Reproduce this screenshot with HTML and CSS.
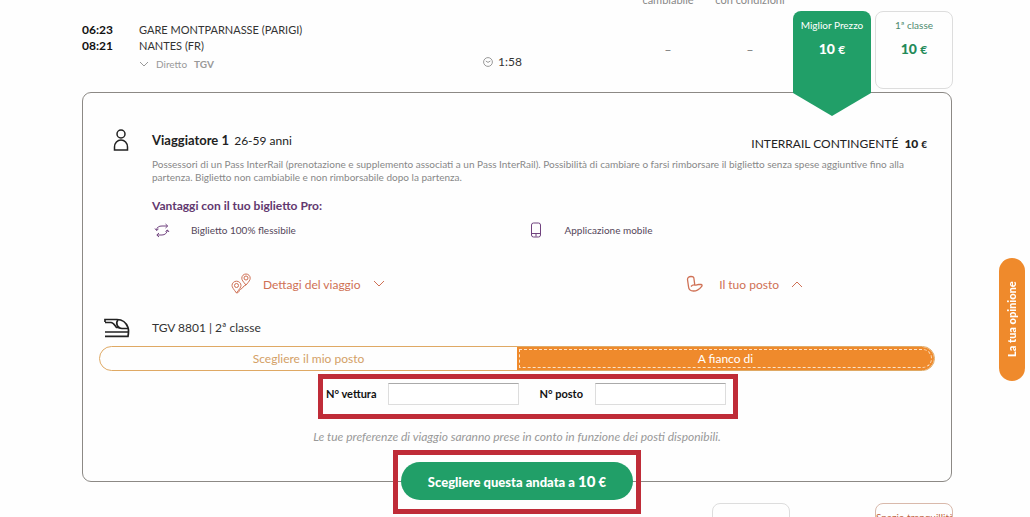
FILE: index.html
```html
<!DOCTYPE html>
<html lang="it">
<head>
    <meta charset="UTF-8">
    <meta name="viewport" content="width=device-width, initial-scale=1.0">
    <title>Scelta del posto</title>
    <link rel="stylesheet" href="styles.css">
</head>
<body>
    <main class="page">
        <section class="journey">
            <div class="times">
                <strong>06:23</strong>
                <strong>08:21</strong>
            </div>
            <div class="stations">
                <span>GARE MONTPARNASSE (PARIGI)</span>
                <span>NANTES (FR)</span>
                <a class="direct" href="#">
                    <svg width="10" height="6" viewBox="0 0 10 6"><path d="M1 1l4 4 4-4"/></svg>
                    Diretto <b>TGV</b>
                </a>
            </div>
            <div class="duration">
                <svg width="10" height="10" viewBox="0 0 10 10"><circle cx="5" cy="5" r="4.4"/><path d="M2.8 4L5 5.4 7.4 4"/></svg>
                1:58
            </div>
            <div class="fare">
                <span class="fare-head">cambiabile</span>
                <span class="dash">–</span>
            </div>
            <div class="fare">
                <span class="fare-head">con condizioni</span>
                <span class="dash">–</span>
            </div>
            <a class="ticket best" href="#">Miglior Prezzo <strong>10 <small>€</small></strong></a>
            <a class="ticket" href="#">1ª classe <strong>10 <small>€</small></strong></a>
        </section>

        <section class="panel">
            <div class="traveller">
                <svg class="person" width="16" height="22" viewBox="0 0 16 22"><circle cx="8" cy="5" r="4"/><path d="M1.5 21v-3a6.5 7 0 0 1 13 0v3z"/></svg>
                <h2>Viaggiatore 1 <span>26-59 anni</span></h2>
                <p class="quota">INTERRAIL CONTINGENTÉ <strong>10 <small>€</small></strong></p>
            </div>
            <div class="details">
                <p class="conditions">Possessori di un Pass InterRail (prenotazione e supplemento associati a un Pass InterRail). Possibilità di cambiare o farsi rimborsare il biglietto senza spese aggiuntive fino alla partenza. Biglietto non cambiabile e non rimborsabile dopo la partenza.</p>
                <h3>Vantaggi con il tuo biglietto Pro:</h3>
                <ul class="benefits">
                    <li>
                        <svg width="20" height="16" viewBox="0 0 20 16"><path d="M4.5 8C5 5 7 4 10 4h5.500M15.500 8c-.5 3-2.500 5-5.500 5H5"/><path d="M13.500 2l2.200 2-2.200 2M7 11l-2.200 2L7 15M3 6.500L4.500 8.500 6.500 7M13.500 9.500l2-1.500 1.500 2"/></svg>
                        Biglietto 100% flessibile
                    </li>
                    <li>
                        <svg width="20" height="16" viewBox="0 0 20 16"><rect x="5.5" y="1" width="9" height="14" rx="2"/><path d="M5.5 11.5h9M10 11.5v3"/></svg>
                        Applicazione mobile
                    </li>
                </ul>
            </div>
            <div class="toggles">
                <button type="button">
                    <svg width="20" height="22" viewBox="0 0 20 22"><path d="M5.5 20C2.5 16 1 14.2 1 12.5a4.5 4.3 0 0 1 9 0C10 14.2 8.5 16 5.5 20z"/><circle cx="5.5" cy="12.5" r="2"/><path d="M15 12C12 8.5 10.8 7 10.8 5.2a4.2 4.2 0 0 1 8.4 0C19.2 7 18 8.5 15 12z"/><circle cx="15" cy="5" r="2"/><path d="M5.5 20c3.5-.5 2-3 4.5-4s1.5-3 5-4"/></svg>
                    Dettagi del viaggio
                    <svg width="12" height="8" viewBox="0 0 12 8"><path d="M1 1l5 5 5-5"/></svg>
                </button>
                <button type="button">
                    <svg class="seat" width="17" height="18" viewBox="0 0 17 18"><path d="M1.5 4.5C1.5 2.5 3 1.5 5 1.500s3 .8 3 2.500l.8 6c1.200.5 2.200-.5 3.700-.5H15c1.200 0 1.300 1 .7 1.800C14 13.5 12 16 7.5 16 4 16 2.700 14.5 2.500 11.500z"/><path d="M8.800 10c-1.500-.2-3 .5-3.800 1.500"/></svg>
                    Il tuo posto
                    <svg width="12" height="8" viewBox="0 0 12 8"><path d="M1 7l5-5 5 5"/></svg>
                </button>
            </div>
            <div class="train">
                <svg width="26" height="20" viewBox="0 0 26 20"><path d="M1 4V1.5h12c6 0 9.5 4 11 8 .7 2 .7 5 0 8.800H1"/><path d="M1 4.500h6c2.500 0 3.500 2.500 5.500 5H16M1 14h23"/><path d="M14 2c-2.500 2.500-1 8.500 4 8.500h6"/></svg>
                <span>TGV 8801 | 2ª classe</span>
            </div>
            <div class="tabs">
                <button type="button">Scegliere il mio posto</button>
                <button type="button" class="active">A fianco di</button>
            </div>
            <div class="seat-row">
                <form class="seat-form">
                    <label for="coach">N° vettura</label>
                    <input type="text" id="coach">
                    <label for="seat">N° posto</label>
                    <input type="text" id="seat">
                </form>
            </div>
            <p class="note">Le tue preferenze di viaggio saranno prese in conto in funzione dei posti disponibili.</p>
            <div class="choose">
                <button type="button">Scegliere questa andata a <b>10</b> €</button>
            </div>
        </section>

        <section class="next">
            <div class="next-ticket empty"></div>
            <div class="next-ticket">Spazio tranquillità</div>
        </section>
    </main>
    <button type="button" class="opinion">La tua opinione</button>
</body>
</html>
```

FILE: styles.css
```css
* {
    box-sizing: border-box;
}
body {
    margin: 0;
    height: 100vh;
    overflow: hidden;
    background: #fefefe;
    color: #333333;
    font-family: Lato, "Open Sans", sans-serif;
    font-size: 12px;
    line-height: 16px;
}
h2, h3, p, ul {
    margin: 0;
    padding: 0;
}
a {
    color: inherit;
    text-decoration: none;
}
button, input {
    font-family: inherit;
}
button {
    cursor: pointer;
}
svg {
    flex: none;
    fill: none;
    stroke: currentColor;
}
.page {
    padding: 0 77px 0 82px;
}

/* journey summary */
.journey {
    display: grid;
    grid-template-columns: 53px 1fr 142px repeat(4, 78px);
    column-gap: 4px;
    height: 92px;
}
.times, .stations {
    display: flex;
    flex-direction: column;
    padding-top: 22px;
}
.times {
    color: #111111;
}
.stations {
    font-size: 11px;
}
.direct {
    display: flex;
    align-items: center;
    gap: 7px;
    line-height: 20px;
    font-size: 10px;
    color: #999999;
}
.duration {
    display: flex;
    align-items: center;
    gap: 5px;
    height: 16px;
    margin-top: 54px;
}
.duration svg {
    color: #999999;
}
.fare {
    text-align: center;
    color: #888888;
    white-space: nowrap;
}
.fare-head {
    display: block;
    margin: -8px -8px 0;
    font-size: 11px;
}
.dash {
    display: block;
    margin-top: 34px;
    font-weight: 700;
}
.ticket {
    height: 78px;
    margin-top: 11px;
    padding-top: 5px;
    border: 1px solid #dddddd;
    border-radius: 8px;
    text-align: center;
    font-size: 10px;
    color: #4d8a6e;
}
.ticket strong {
    display: block;
    margin-top: 8px;
    font-size: 14px;
    font-weight: 900;
    color: #238a59;
}
.ticket small {
    font-size: 12px;
    font-weight: 700;
}
.best {
    position: relative;
    z-index: 1;
    height: 105px;
    border: 0;
    padding-top: 6px;
    background: #219f68;
    color: #ffffff;
    clip-path: polygon(0 0, 100% 0, 100% 82px, 50% 100%, 0 82px);
}
.best strong {
    color: #ffffff;
}

/* fare details */
.panel {
    margin-right: 1px;
    padding: 0 16px;
    border: 1px solid #8c8985;
    border-radius: 9px;
}
.traveller {
    display: flex;
    align-items: center;
    height: 50px;
    margin-top: 22px;
    padding-right: 8px;
    color: #222222;
}
.person {
    margin: 0 23px 0 14px;
    stroke-width: 1.5;
}
.traveller h2 {
    font-size: 13px;
    font-weight: 700;
}
.traveller h2 span {
    margin-left: 2px;
    font-size: 12px;
    font-weight: 400;
}
.quota {
    margin-left: auto;
    padding-top: 8px;
}
.quota strong {
    margin-left: 3px;
    font-weight: 900;
}
.quota small {
    font-size: 10px;
}
.details {
    padding: 0 16px 0 53px;
}
.conditions {
    margin-top: -7px;
    font-size: 10px;
    line-height: 13px;
    color: #888888;
}
.details h3 {
    margin-top: 14px;
    font-size: 12px;
    color: #62386f;
}
.benefits {
    display: grid;
    grid-template-columns: 1fr 1fr;
    margin-top: 8px;
    padding-right: 20px;
    list-style: none;
    font-size: 10px;
    color: #54465a;
}
.benefits li {
    display: flex;
    align-items: center;
    gap: 19px;
}
.benefits svg {
    color: #70427e;
}
.toggles {
    display: flex;
    justify-content: space-between;
    margin-top: 34px;
    padding: 0 132px;
}
.toggles button {
    display: flex;
    align-items: center;
    gap: 12px;
    height: 24px;
    padding: 0;
    border: 0;
    background: none;
    font-size: 12px;
    color: #cf7054;
}
.seat {
    margin-right: 4px;
    stroke-width: 1.3;
}
.train {
    display: flex;
    align-items: center;
    gap: 22px;
    height: 20px;
    margin: 22px 0 8px 5px;
}
.train svg {
    color: #222222;
    stroke-width: 1.7;
}
.tabs {
    display: grid;
    grid-template-columns: 1fr 1fr;
    border: 1px solid #dfa964;
    border-radius: 13px;
    overflow: hidden;
}
.tabs button {
    height: 23px;
    padding: 0;
    border: 0;
    background: none;
    font-size: 12px;
    color: #d3a066;
}
.tabs .active {
    border-radius: 0 12px 12px 0;
    background: #ef8a2c;
    color: #ffffff;
    outline: 1px dashed #fbe3c8;
    outline-offset: -3px;
}
.seat-row {
    display: flex;
    justify-content: center;
    padding: 3px 0 0 22px;
}
.seat-form {
    display: flex;
    align-items: center;
    height: 45px;
    padding: 0 7px 6px 3px;
    border: 5px solid #bf2c38;
}
.seat-form label {
    font-size: 11px;
    font-weight: 700;
    color: #111111;
}
.seat-form input {
    width: 131px;
    height: 22px;
    margin: 0 20px 0 12px;
    border: 1px solid #dddddd;
    border-top-color: #aaaaaa;
}
.seat-form input:last-child {
    margin-right: 0;
}
.note {
    margin-top: 10px;
    text-align: center;
    font-size: 12px;
    font-style: italic;
    color: #999999;
}
.choose {
    position: relative;
    width: fit-content;
    margin: 5px auto -33px;
    padding: 7px 3px 9px;
    border: 5px solid #bf2c38;
}
.choose button {
    height: 38px;
    padding: 0 27px;
    border: 0;
    border-radius: 19px;
    background: #219f68;
    font-size: 13px;
    font-weight: 900;
    color: #ffffff;
}
.choose b {
    font-size: 15px;
    font-weight: 900;
}

/* next journey */
.next {
    display: flex;
    justify-content: flex-end;
    gap: 85px;
    margin-top: 21px;
}
.next-ticket {
    width: 78px;
    height: 78px;
    padding-top: 5px;
    border: 1px solid #d9b9ab;
    border-radius: 8px;
    overflow: hidden;
    white-space: nowrap;
    font-size: 10px;
    color: #c0643f;
}
.empty {
    border-color: #dddddd;
}

.opinion {
    position: fixed;
    top: 258px;
    right: 5px;
    width: 26px;
    height: 123px;
    padding: 0;
    border: 0;
    border-radius: 13px;
    background: #ef8a2c;
    font-size: 11px;
    font-weight: 900;
    color: #ffffff;
    writing-mode: vertical-rl;
    transform: rotate(180deg);
}
```
